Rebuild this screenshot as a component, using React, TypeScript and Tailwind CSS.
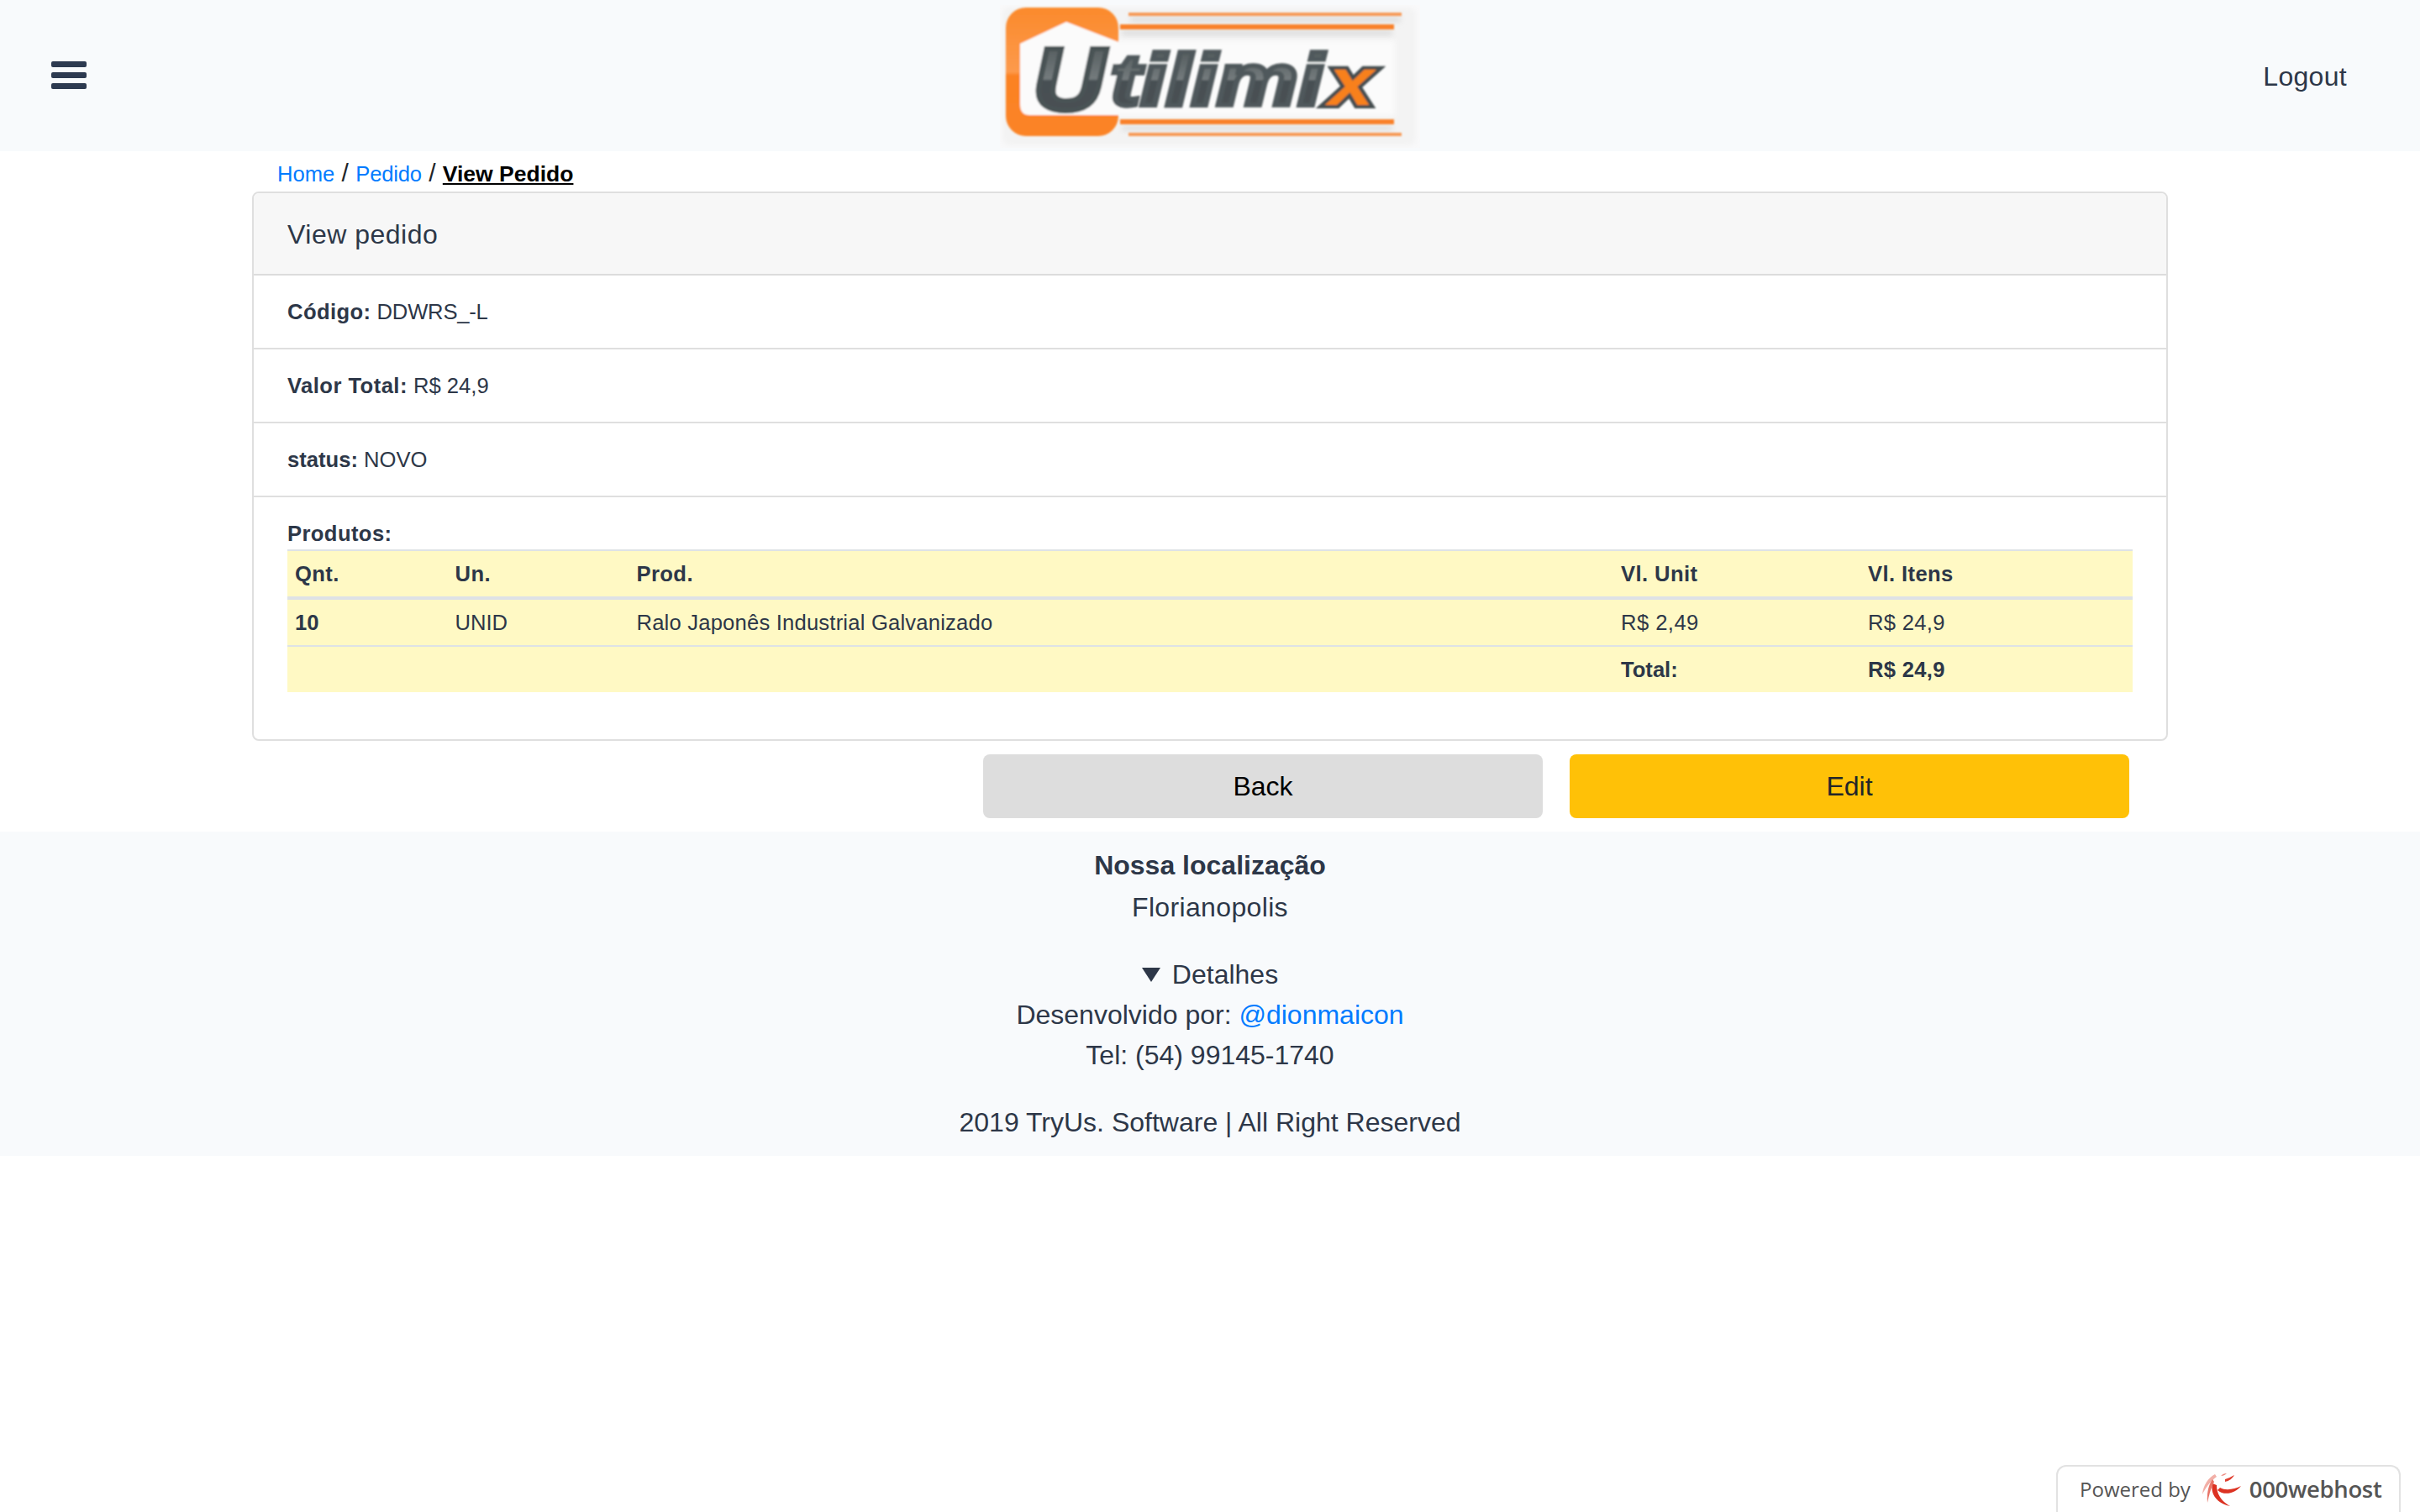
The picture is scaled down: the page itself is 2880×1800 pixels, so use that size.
import React from "react";

const Logo = () => (
  <svg viewBox="1190 6 500 170" className="w-[500px] h-[170px] block" aria-label="Utilimix">
    <defs>
      <linearGradient id="metal" x1="0" y1="0" x2="0" y2="1">
        <stop offset="0" stopColor="#465052" />
        <stop offset="0.25" stopColor="#5c6466" />
        <stop offset="0.5" stopColor="#747b7d" />
        <stop offset="0.52" stopColor="#474f52" />
        <stop offset="1" stopColor="#4a5255" />
      </linearGradient>
      <linearGradient id="org" x1="0" y1="0" x2="0" y2="1">
        <stop offset="0" stopColor="#fb8a2c" />
        <stop offset="0.5" stopColor="#fd9a4c" />
        <stop offset="0.53" stopColor="#fb8222" />
        <stop offset="1" stopColor="#fb8428" />
      </linearGradient>
      <filter id="soft" x="-5%" y="-5%" width="110%" height="110%">
        <feGaussianBlur stdDeviation="0.9" />
      </filter>
      <filter id="shadow" x="-5%" y="-50%" width="110%" height="300%">
        <feGaussianBlur stdDeviation="3" />
      </filter>
    </defs>
    <rect x="1190" y="6" width="500" height="170" fill="#f9f9fa" />
    <rect x="1193" y="9" width="492" height="164" rx="8" fill="#f3f3f3" filter="url(#shadow)" />
    <rect x="1240" y="48" width="420" height="90" fill="#fbfbfb" filter="url(#shadow)" />
    <g filter="url(#shadow)" fill="#dcdcdc">
      <rect x="1345" y="20" width="322" height="6" />
      <rect x="1335" y="36" width="322" height="6" />
      <rect x="1335" y="150" width="322" height="5" />
    </g>
    <g filter="url(#soft)">
      <rect x="1197" y="9" width="134" height="153" rx="24" fill="url(#org)" />
      <path d="M1214 52 L1269 26 L1331 50 L1331 137 L1225 137 Q1214 137 1214 124 Z" fill="#fbfbfb" />
      <rect x="1343" y="15" width="325" height="4" fill="#f79a56" />
      <rect x="1333" y="29" width="326" height="6" fill="#f9812a" />
      <rect x="1333" y="142" width="326" height="6" fill="#f9812a" />
      <rect x="1343" y="158" width="325" height="4" fill="#f79a56" />
      <text x="1229" y="131" fontFamily="'Liberation Sans', sans-serif" fontWeight="700" fontStyle="italic" fontSize="106" textLength="86" lengthAdjust="spacingAndGlyphs" fill="url(#metal)" stroke="#4a5255" strokeWidth="6">U</text>
      <text x="1321" y="125" fontFamily="'Liberation Sans', sans-serif" fontWeight="700" fontStyle="italic" fontSize="88" textLength="254" lengthAdjust="spacingAndGlyphs" fill="url(#metal)" stroke="#50585b" strokeWidth="5.5">tilimi</text>
      <text x="1581" y="125" fontFamily="'Liberation Sans', sans-serif" fontWeight="700" fontStyle="italic" fontSize="80" textLength="54" lengthAdjust="spacingAndGlyphs" fill="#f8801f" stroke="#454d50" strokeWidth="8" paintOrder="stroke">x</text>
    </g>
  </svg>
);

const Swirl = () => (
  <svg viewBox="0 0 50 42" className="w-[50px] h-[42px] block">
    <g style={{ filter: "blur(0.4px)" }}>
      <path d="M15 14 C12 26 20 38 36 41 C27 36 20 28 20 16 Z" fill="#dc3222" />
      <path d="M21 22 C29 29 42 26 49 17 C41 21 31 23 24 19 Z" fill="#dc3222" />
      <path d="M30 12 C35 11 39 8 41 4 C37 6 34 8 30 9 Z" fill="#df3f30" />
      <path d="M25 5 C27 3 29 2 32 2 C30 4 28 5 25 5 Z" fill="#ec8a80" />
      <path d="M18 3 C10 7 4 16 3 27 C7 19 12 12 20 6 Z" fill="#f2b0a8" />
      <path d="M15 9 C11 15 8 24 9 37 C11 28 13 20 17 12 Z" fill="#e87568" />
    </g>
  </svg>
);

const thCls = "text-left font-bold tracking-[0.4px] px-[9px] py-[8px] leading-[38px] border-t-2 border-b-4 border-[#dee2e6]";
const tdCls = "px-[9px] py-[8px] leading-[38px] border-b-2 border-[#dee2e6]";
const tfCls = "px-[9px] py-[8px] leading-[38px] font-bold";

export default function App() {
  return (
    <div className="relative min-h-screen bg-white text-[32px] leading-[48px] text-[#2d3748]" style={{ fontFamily: "'Liberation Sans', Arial, sans-serif" }}>
      <nav className="relative h-[180px] bg-[#f8fafc] flex items-center justify-between pl-[61px] pr-[87px]">
        <button className="flex flex-col gap-[6px] mt-[-2px]" aria-label="menu">
          <span className="block w-[42px] h-[7px] rounded-[2px] bg-[#2d3a50]" />
          <span className="block w-[42px] h-[7px] rounded-[2px] bg-[#2d3a50]" />
          <span className="block w-[42px] h-[7px] rounded-[2px] bg-[#2d3a50]" />
        </button>
        <a className="absolute left-[1190px] top-[6px]"><Logo /></a>
        <a className="tracking-[0.3px] mt-[1px]">Logout</a>
      </nav>

      <main className="w-[2280px] mx-auto">
        <div className="h-[48px] pl-[30px] pt-[3px] leading-[45px] whitespace-nowrap">
          <a className="text-[25.6px] text-[#007bff]">Home</a>
          <span className="text-[#212529] text-[30px]"> / </span>
          <a className="text-[25.6px] text-[#007bff] tracking-[-0.2px]">Pedido</a>
          <span className="text-[#212529] text-[30px]"> / </span>
          <a className="text-[26.5px] font-bold text-black underline">View Pedido</a>
        </div>

        <section className="border-2 border-[#dfdfdf] rounded-[8px] overflow-hidden">
          <header className="bg-[#f7f7f7] px-[40px] pt-[25px] pb-[23px] border-b-2 border-[#dcdcdc] tracking-[0.5px]">View pedido</header>
          <div className="text-[25.6px] leading-[38px]">
            <div className="px-[40px] py-[24px] border-b-2 border-[#dfdfdf]"><b className="tracking-[0.4px]">Código:</b> <span className="tracking-[-0.2px]">DDWRS_-L</span></div>
            <div className="px-[40px] py-[24px] border-b-2 border-[#dfdfdf]"><b className="tracking-[0.45px]">Valor Total:</b> R$ 24,9</div>
            <div className="px-[40px] py-[24px] border-b-2 border-[#dfdfdf]"><b>status:</b> NOVO</div>
            <div className="px-[40px] pt-[24px] pb-[56px]">
              <b className="block tracking-[0.4px]">Produtos:</b>
              <table className="w-full table-fixed border-separate border-spacing-0 bg-[#fff9c4]">
                <colgroup>
                  <col className="w-[190.5px]" />
                  <col className="w-[216px]" />
                  <col className="w-[1171.5px]" />
                  <col className="w-[294px]" />
                  <col className="w-[324px]" />
                </colgroup>
                <thead>
                  <tr>
                    <th className={thCls}>Qnt.</th>
                    <th className={thCls}>Un.</th>
                    <th className={thCls}>Prod.</th>
                    <th className={thCls}>Vl. Unit</th>
                    <th className={thCls}>Vl. Itens</th>
                  </tr>
                </thead>
                <tbody>
                  <tr>
                    <td className={tdCls + " font-bold"}>10</td>
                    <td className={tdCls}>UNID</td>
                    <td className={tdCls + " tracking-[0.2px]"}>Ralo Japonês Industrial Galvanizado</td>
                    <td className={tdCls + " tracking-[0.45px]"}>R$ 2,49</td>
                    <td className={tdCls + " tracking-[0.3px]"}>R$ 24,9</td>
                  </tr>
                  <tr>
                    <td className={tfCls}></td>
                    <td className={tfCls}></td>
                    <td className={tfCls}></td>
                    <td className={tfCls}>Total:</td>
                    <td className={tfCls + " tracking-[0.3px]"}>R$ 24,9</td>
                  </tr>
                </tbody>
              </table>
            </div>
          </div>
        </section>

        <div className="flex justify-end gap-[32px] pt-[16px] pr-[46px] pb-[16px]">
          <button className="w-[666px] h-[76px] rounded-[8px] bg-[#dddddd] text-black">Back</button>
          <button className="w-[666px] h-[76px] rounded-[8px] bg-[#ffc107] text-[#212529]">Edit</button>
        </div>
      </main>

      <footer className="bg-[#f8fafc] text-center pt-[16px] pb-[16px]">
        <div className="font-bold">Nossa localização</div>
        <div className="pb-[32px] pt-[2px] tracking-[0.35px]">Florianopolis</div>
        <div className="flex justify-center items-center gap-[14px]">
          <svg viewBox="0 0 22 17" className="w-[22px] h-[17px]"><polygon points="0,0 22,0 11,17" fill="#2d3748" /></svg>
          <span>Detalhes</span>
        </div>
        <div>Desenvolvido por: <a className="text-[#007bff]">@dionmaicon</a></div>
        <div className="pb-[32px]">Tel: (54) 99145-1740</div>
        <div>2019 TryUs. Software | All Right Reserved</div>
      </footer>

      <div className="absolute right-[23px] bottom-0 w-[410px] h-[56px] bg-white border-2 border-b-0 border-[#e2e2e2] rounded-t-[12px] flex items-center pl-[26px] text-[#555] leading-none whitespace-nowrap" style={{ fontFamily: "'Open Sans', sans-serif" }}>
        <span className="text-[24px]">Powered by</span>
        <span className="ml-[11px]"><Swirl /></span>
        <span className="ml-[9px] text-[27.5px] font-semibold tracking-[-0.35px]">000webhost</span>
      </div>
    </div>
  );
}
